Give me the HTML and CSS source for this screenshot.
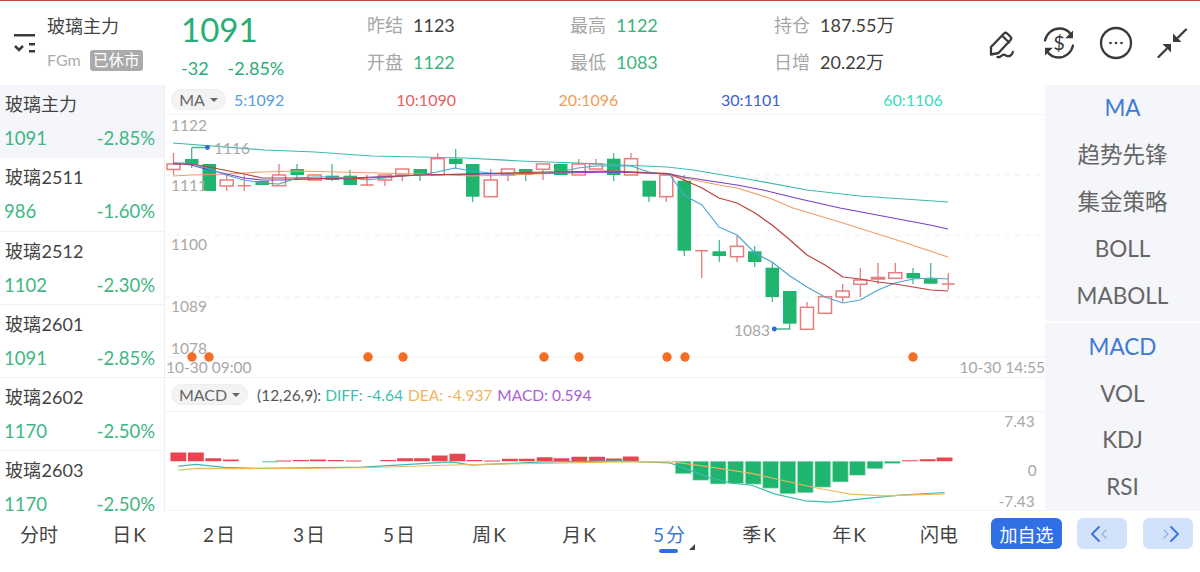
FILE: index.html
```html
<!DOCTYPE html>
<html lang="zh-CN">
<head>
<meta charset="utf-8">
<title>玻璃主力</title>
<link rel="stylesheet" href="styles.css">
</head>
<body>
<div class="app">
  <header class="header">
    <svg class="menu-icon" width="22" height="20" viewBox="0 0 22 20"><path d="M0 1.2H21M1 12l4 4 4-4M15 10.2h6M15 17.2h6"/></svg>
    <div class="title">
      <div class="name">玻璃主力</div>
      <div class="code">FGm <span class="badge">已休市</span></div>
    </div>
    <div class="quote">
      <div class="price">1091</div>
      <div class="delta"><span>-32</span><span>-2.85%</span></div>
    </div>
    <div class="stats">
      <div class="stat s1"><label>昨结</label><b class="dark">1123</b></div>
      <div class="stat s2"><label>最高</label><b>1122</b></div>
      <div class="stat s3"><label>持仓</label><b class="dark">187.55万</b></div>
      <div class="stat s1"><label>开盘</label><b>1122</b></div>
      <div class="stat s2"><label>最低</label><b>1083</b></div>
      <div class="stat s3"><label>日增</label><b class="dark">20.22万</b></div>
    </div>
    <div class="tools">
      <svg width="32" height="32" viewBox="0 0 32 32"><path d="M4 27.5V20L17 6.5Q18.6 5 20.2 6.5L23.5 9.8Q25 11.4 23.5 13L11.5 26ZM15.5 9l6.5 6.5"/><path d="M10.5 30c3 1.5 4.500-3 7-2.200 2 .7 3.500 2.500 6 .7 1.500-1 2-2 2.500-3.500"/></svg>
      <svg width="34" height="34" viewBox="0 0 34 34"><path d="M3 14.500C4.500 7.500 10.500 2.500 17.500 2.500c4.500 0 8.500 2 11 5.500M31 19.500C29.500 26.500 23.500 31.500 16.500 31.500c-4.500 0-8.500-2-11-5.500"/><path class="solid" d="M31 4.500v7.800h-7.800zM3 29.500v-7.800h7.800z"/><text x="17" y="24" class="dollar">$</text></svg>
      <svg width="34" height="34" viewBox="0 0 34 34"><circle cx="17" cy="17" r="15"/><circle class="solid" cx="11.500" cy="17" r="1.300"/><circle class="solid" cx="17" cy="17" r="1.300"/><circle class="solid" cx="22.500" cy="17" r="1.300"/></svg>
      <svg width="32" height="32" viewBox="0 0 32 32"><path d="M30 2.500 22 10.500M2.500 30 10.500 22"/><path class="solid" d="M17 6.500V15h8.500zM15 25.500V17H6.500z"/></svg>
    </div>
  </header>

  <main class="main">
    <aside class="contracts">
      <div class="contract active"><div class="c-name">玻璃主力</div><div class="c-vals"><span>1091</span><span>-2.85%</span></div></div>
      <div class="contract"><div class="c-name">玻璃 2511</div><div class="c-vals"><span>986</span><span>-1.60%</span></div></div>
      <div class="contract"><div class="c-name">玻璃 2512</div><div class="c-vals"><span>1102</span><span>-2.30%</span></div></div>
      <div class="contract"><div class="c-name">玻璃 2601</div><div class="c-vals"><span>1091</span><span>-2.85%</span></div></div>
      <div class="contract"><div class="c-name">玻璃 2602</div><div class="c-vals"><span>1170</span><span>-2.50%</span></div></div>
      <div class="contract"><div class="c-name">玻璃 2603</div><div class="c-vals"><span>1170</span><span>-2.50%</span></div></div>
    </aside>

    <section class="charts">
      <div class="legend ma-legend">
        <span class="chip ma-chip">MA<i class="caret"></i></span>
        <div class="ma-values">
          <span class="c5">5:1092</span><span class="c10">10:1090</span><span class="c20">20:1096</span><span class="c30">30:1101</span><span class="c60">60:1106</span>
        </div>
      </div>
      <svg class="price-chart" width="880" height="262" viewBox="165 115 880 262">
        <path class="grid" d="M165 175H1045M165 235H1045M165 297H1045"/>
        <path class="grid-solid" d="M165 357H1045"/>
        <path class="wick-r" d="M173.500 153V175M226.700 175V191M244.300 175V191M279 164V186M367 175V186M385 175V186M402.300 175V181M437.700 153V175M490.700 169V197M508 169V181M543 164V180M578.700 159V175M596 159V169M631 153V175M666.300 175V202M701.700 250V278M737 236V262M807 302V329M842.700 284V302M860.300 268V297M878 263V284M895.300 263V278M948.300 273V290"/>
        <path class="wick-g" d="M191.700 147.500V168M297 164V180M332 164V181M350 170V185M420 169V181M455.700 149V169M472.700 164V202M525.700 169V181M613.700 153V181M649 181V202M684.300 175V256M719.300 240V262M754.700 246V267M772.300 262V302M789.700 291V329H774.300M913 268V284M930.700 263V284M191.700 147.500H207.500"/>
        <g class="hollow">
          <rect x="167" y="164" width="13" height="5.500"/><rect x="220.200" y="180" width="13" height="6"/><path d="M237.800 185.700h13"/><rect x="272.500" y="175" width="13" height="10.700"/><rect x="308.200" y="175" width="13" height="5"/><path d="M360.500 185h13"/><rect x="378.500" y="175" width="13" height="5"/><rect x="395.800" y="169" width="13" height="6"/><rect x="431.200" y="158.700" width="13" height="16.300"/><rect x="484.200" y="180" width="13" height="16.700"/><rect x="501.500" y="169" width="13" height="6"/><rect x="536.500" y="164" width="13" height="5.300"/><rect x="572.200" y="164" width="13" height="11"/><rect x="589.500" y="164" width="13" height="5"/><rect x="624.500" y="158.700" width="13" height="16.300"/><rect x="659.800" y="175" width="13" height="21.700"/><path d="M695.200 250.700h13"/><rect x="730.500" y="246.300" width="13" height="10.400"/><rect x="800.500" y="307.300" width="13" height="22"/><rect x="818.500" y="296.700" width="13" height="16.600"/><rect x="836.200" y="291" width="13" height="6"/><rect x="853.800" y="280" width="13" height="4.300"/><rect x="871.500" y="277.500" width="13" height="1.500"/><rect x="888.800" y="272.700" width="13" height="5.600"/><path d="M941.800 284h13"/>
        </g>
        <g class="solid-g">
          <rect x="185" y="159" width="13.500" height="5.500"/><rect x="202.500" y="164" width="13.500" height="27"/><rect x="255.500" y="181" width="13.500" height="4"/><rect x="290.500" y="169" width="13.500" height="6"/><rect x="325.500" y="175.700" width="13.500" height="4.300"/><rect x="343.500" y="175.700" width="13.500" height="9.300"/><rect x="413.500" y="169" width="13.500" height="6"/><rect x="449" y="158.700" width="13.500" height="5.300"/><rect x="466" y="164" width="13.500" height="32.700"/><rect x="519" y="169" width="13.500" height="6"/><rect x="554" y="164" width="13.500" height="11"/><rect x="607" y="158.700" width="13.500" height="16.300"/><rect x="642.500" y="180.700" width="13.500" height="16"/><rect x="677.500" y="180.700" width="13.500" height="70"/><rect x="712.500" y="251.300" width="13.500" height="4.700"/><rect x="748" y="251.300" width="13.500" height="10.700"/><rect x="765.500" y="267.700" width="13.500" height="29.300"/><rect x="783" y="291" width="13.500" height="32.700"/><rect x="906.500" y="273" width="13.500" height="5.300"/><rect x="924" y="278.700" width="13.500" height="5"/>
        </g>
        <polyline class="l60" points="173,143 265,150 315,152 372,156 465,158 520,161 577,163 667,167 693,170 753,180 807,190 860,196 948,202"/>
        <polyline class="l20" points="173,176 191,175 226,174 262,172 297,171 420,174 472,176 508,175 560,173 613,171 666,173 684,178 719,185 737,188 772,199 793,208 843,223 903,242 948,257"/>
        <polyline class="l30" points="173,163 191,165 209,170 244,178 262,180 279,180 350,178 420,175 472,174 560,173 613,172 670,174 684,177 737,185 763,190 800,199 840,208 930,225 948,229"/>
        <polyline class="l5" points="173,163 191,163 209,169 226,175 244,180 262,183 279,184 297,178 314,177 332,177 350,178 367,180 385,178 402,176 420,175 437,172 455,168 472,171 490,173 508,174 525,173 543,173 560,172 578,168 596,166 613,166 631,166 649,172 670,175 684,195 702,205 719,227 737,235 755,253 772,262 790,276 807,287 825,297 843,303 860,300 878,290 895,283 913,279 931,278 948,279"/>
        <polyline class="l10" points="173,164 191,164 209,167 244,174 262,178 297,178 350,179 420,175 472,174 543,172 613,171 670,174 684,180 702,188 719,198 737,203 755,213 772,225 790,240 807,255 825,265 843,277 860,279 878,282 895,284 913,287 931,290 948,291"/>
        <circle class="mark" cx="207.500" cy="147.500" r="2.400"/><circle class="mark" cx="774.300" cy="329" r="2.400"/>
        <g class="axis">
          <text x="171" y="131">1122</text><text x="171" y="191">1111</text><text x="171" y="250">1100</text><text x="171" y="312">1089</text><text x="171" y="354">1078</text>
          <text x="214" y="154">1116</text><text x="734" y="336">1083</text>
          <text x="166" y="373">10-30 09:00</text><text x="1045" y="373" class="end">10-30 14:55</text>
        </g>
        <g class="dots"><circle cx="192" cy="357" r="4.700"/><circle cx="209" cy="357" r="4.700"/><circle cx="368" cy="357" r="4.700"/><circle cx="403" cy="357" r="4.700"/><circle cx="544" cy="357" r="4.700"/><circle cx="579" cy="357" r="4.700"/><circle cx="667" cy="357" r="4.700"/><circle cx="685" cy="357" r="4.700"/><circle cx="913" cy="357" r="4.700"/></g>
      </svg>
      <div class="legend macd-legend">
        <span class="chip macd-chip">MACD<i class="caret"></i></span>
        <span class="params">(12,26,9):</span><span class="diff">DIFF: -4.64</span><span class="dea">DEA: -4.937</span><span class="macd">MACD: 0.594</span>
      </div>
      <svg class="macd-chart" width="880" height="99" viewBox="165 412 880 99">
        <path class="bar-r" d="M166 453h16v8.700h-16zM183.700 453h16v8.700h-16zM201.300 458.700h16v3h-16zM219 460h16v1.700h-16zM272 461h16v1h-16zM290 460.500h16v1.200h-16zM307 460h16v1.700h-16zM325 460.500h16v1.200h-16zM343 461h16v1h-16zM378 460.500h16v1.200h-16zM395 458.700h16v3h-16zM412 458.700h16v3h-16zM430 456h16v5.700h-16zM448 454.300h16v7.400h-16zM465 460.500h16v1.200h-16zM483 461h16v1h-16zM501 459.300h16v2.400h-16zM518 459.300h16v2.400h-16zM536 457.700h16v4h-16zM553 458.700h16v3h-16zM571 457.300h16v4.400h-16zM589 457.300h16v4.400h-16zM606 459h16v2.700h-16zM623 457h16v4.700h-16zM905 460.800h16v1h-16zM923 459.700h16v2h-16zM940 458h16v3.700h-16z"/>
        <path class="bar-g" d="M676 461.700h16v12.600h-16zM693.700 461.700h16v19.300h-16zM711.300 461.700h16v23h-16zM729 461.700h16v22.600h-16zM746.700 461.700h16v23.300h-16zM764.300 461.700h16v27.300h-16zM781.700 461.700h16v33h-16zM799.300 461.700h16v32h-16zM817 461.700h16v26.300h-16zM834.700 461.700h16v21h-16zM852 461.700h16v14.300h-16zM869.700 461.700h16v7.600h-16zM887.300 461.700h16v2.300h-16zM259 461.700h16v1h-16z"/>
        <polyline class="diff-line" points="174,466.700 192,465 220,468 257,469 360,467.700 450,462.300 470,465.700 537,462.700 620,461.300 670,463.300 693,471.700 710,478 733,484 753,486 777,495 807,501.700 833,503 870,499.300 903,496 948,493.300"/>
        <polyline class="dea-line" points="174,470.700 193,469 260,469.300 360,468.300 460,465.300 537,464 620,462.300 673,462.300 710,467.300 753,474 787,481.700 820,489 853,495 887,496.700 948,494.700"/>
        <g class="axis"><text x="1039" y="427" class="end">7.43</text><text x="1041" y="477" class="end">0</text><text x="1039" y="508" class="end">-7.43</text></g>
      </svg>
    </section>

    <nav class="indicators">
      <div class="ind-group">
        <span class="on">MA</span><span>趋势先锋</span><span>集金策略</span><span>BOLL</span><span>MABOLL</span>
      </div>
      <div class="ind-group lower">
        <span class="on">MACD</span><span>VOL</span><span>KDJ</span><span>RSI</span>
      </div>
    </nav>
  </main>

  <footer class="tabbar">
    <div class="tabs">
      <span>分时</span><span>日 K</span><span>2 日</span><span>3 日</span><span>5 日</span><span>周 K</span><span>月 K</span><span class="current">5 分</span><span>季 K</span><span>年 K</span><span>闪电</span>
    </div>
    <div class="actions">
      <button class="add">加自选</button>
      <button class="nav"><svg width="26" height="18" viewBox="0 0 26 18"><path class="strong" d="M10 2 3 9l7 7"/><path class="weak" d="M17 5l-4 4 4 4"/></svg></button>
      <button class="nav"><svg width="26" height="18" viewBox="0 0 26 18"><path class="weak" d="M9 5l4 4-4 4"/><path class="strong" d="M16 2l7 7-7 7"/></svg></button>
    </div>
  </footer>
</div>
</body>
</html>
```
FILE: styles.css
```css
* { box-sizing: border-box; }
html, body { margin: 0; padding: 0; background: #fff; }
body { font-family: Lato, "Noto Sans CJK SC", sans-serif; color: #444; overflow: hidden; }
.app { width: 1200px; height: 572px; display: flex; flex-direction: column; }

/* header */
.header { height: 85px; border-top: 1px solid #bf4a48; display: flex; align-items: flex-start; position: relative; }
.menu-icon { margin: 33px 0 0 14px; flex: none; fill: none; stroke: #3a3a3a; stroke-width: 2.500; }
.title { margin: 12px 0 0 11px; width: 134px; flex: none; }
.name { font-size: 18px; line-height: 26px; color: #444; }
.code { margin-top: 10px; font-size: 16px; line-height: 22px; color: #aaa; display: flex; align-items: center; gap: 5px; white-space: pre; }
.badge { background: #aaa; color: #fff; border-radius: 3px; font-size: 15.500px; line-height: 21px; padding: 0 3px; width: 53px; text-align: center; }
.quote { width: 186px; flex: none; padding-top: 9px; color: #27ae74; }
.price { font-size: 33px; line-height: 38px; }
.delta { margin-top: 9px; font-size: 18px; line-height: 22px; display: flex; gap: 19px; }
.stats { width: 544px; flex: none; margin-top: 13px; display: grid; grid-template-columns: 203px 204px 137px; row-gap: 15px; font-size: 18px; line-height: 22px; }
.stat { display: flex; gap: 10px; white-space: nowrap; }
.stat label { color: #a6a6a6; }
.stat b { font-weight: 400; color: #3cb37e; }
.stat b.dark { color: #404040; }
.tools { position: absolute; right: 12px; top: 25px; display: flex; gap: 23px; align-items: center; }
.tools svg { fill: none; stroke: #3a3a3a; stroke-width: 2.300; stroke-linecap: round; stroke-linejoin: round; }
.tools .solid { fill: #3a3a3a; stroke: none; }
.tools .dollar { font-size: 20px; fill: #3a3a3a; stroke: none; text-anchor: middle; }

/* main */
.main { height: 426px; display: flex; flex: none; }
.contracts { width: 165px; flex: none; height: 426px; overflow: hidden; border-right: 1px solid #eee; }
.contract { height: 73.300px; padding: 7px 9px 0 5px; border-bottom: 1px solid #f2f2f2; }
.contract.active { background: #f4f6fb; border-bottom: 0; }
.c-name { font-size: 18px; line-height: 24px; color: #444; word-spacing: -4px; }
.c-vals { margin-top: 10px; display: flex; justify-content: space-between; font-size: 18.500px; line-height: 24px; color: #3fb683; }
.c-vals span:first-child { margin-left: -1px; }

.charts { width: 880px; flex: none; height: 426px; display: flex; flex-direction: column; }
.legend { display: flex; align-items: center; white-space: nowrap; }
.ma-legend { height: 30px; padding-left: 6px; border-bottom: 1px solid #f3f3f3; font-size: 16px; }
.chip { display: inline-flex; align-items: center; justify-content: center; gap: 5px; height: 21px; border: 1px solid #eee; background: #f3f3f3; border-radius: 11px; font-size: 16px; color: #666; flex: none; }
.ma-chip { width: 55px; }
.macd-chip { width: 77px; }
.caret { width: 0; height: 0; border: 4px solid transparent; border-top: 4.500px solid #666; border-bottom: 0; }
.ma-values { display: grid; grid-template-columns: repeat(5, 162.300px); margin-left: 8px; }
.c5 { color: #5b9be0; }
.c10 { color: #e2625f; }
.c20 { color: #ef9d58; }
.c30 { color: #3c60cf; }
.c60 { color: #3fd8bd; }

.price-chart, .macd-chart { display: block; flex: none; }
.macd-legend { height: 35px; padding-left: 6px; font-size: 15.500px; border-top: 1px solid #f2f2f2; border-bottom: 1px solid #f3f3f3; }
.params { margin-left: 9px; color: #555; }
.diff { margin-left: 4px; color: #3cc0ae; }
.dea { margin-left: 5px; color: #efb65c; }
.macd { margin-left: 5px; color: #a95cd8; }
.macd-chart { border-bottom: 1px solid #f3f3f3; }

.grid { stroke: #efefef; stroke-dasharray: 5 5; fill: none; }
.grid-solid { stroke: #f2f2f2; fill: none; }
.wick-r { stroke: #df7f7f; stroke-width: 1.300; fill: none; }
.wick-g { stroke: #46b98a; stroke-width: 1.300; fill: none; }
.hollow rect { fill: #fff; stroke: #e87d7d; stroke-width: 1.500; }
.hollow path { stroke: #e87d7d; stroke-width: 1.500; fill: none; }
.solid-g rect { fill: #1fb56f; }
polyline { fill: none; stroke-width: 1.200; stroke-linejoin: round; }
.l5 { stroke: #4fa3d6; }
.l10 { stroke: #b9403e; }
.l20 { stroke: #ee9f66; }
.l30 { stroke: #7a3fcc; }
.l60 { stroke: #3dbaaa; }
.mark { fill: #2f66d0; }
.axis text { font-size: 15.500px; fill: #a8a8a8; }
.axis text.end { text-anchor: end; }
.dots circle { fill: #f56d24; }
.bar-r { fill: #ea4450; }
.bar-g { fill: #1fb56f; stroke: #bfe9d5; stroke-width: .6; }
.diff-line { stroke: #3bbcab; }
.dea-line { stroke: #edb95d; }

.indicators { width: 155px; flex: none; display: flex; flex-direction: column; gap: 2px; }
.ind-group { background: #f5f6f9; display: flex; flex-direction: column; align-items: center; font-size: 22.500px; color: #666; }
.ind-group span { display: block; height: 47px; line-height: 46px; white-space: nowrap; }
.ind-group:first-child { height: 236px; }
.ind-group.lower { flex: 1; padding-top: 1px; }
.ind-group.lower span { height: 46.600px; }
.ind-group .on { color: #3f79d8; }

/* bottom */
.tabbar { flex: 1; display: flex; align-items: flex-start; }
.tabs { width: 991px; flex: none; padding: 9px 0 0 20px; display: flex; gap: 52px; font-size: 19px; line-height: 30px; color: #444; }
.tabs span { width: 38px; text-align: center; white-space: nowrap; position: relative; word-spacing: -3px; }
.tabs .current { color: #3f79d8; }
.tabs .current::before { content: ""; position: absolute; left: 9px; top: 29px; width: 19px; height: 4px; border-radius: 2px; background: #2f6fe0; }
.tabs .current::after { content: ""; position: absolute; left: 39px; top: 24px; border: 3.500px solid transparent; border-right-color: #444; border-bottom-color: #444; }
.actions { margin-top: 7px; display: flex; }
.actions button { height: 31px; border: 0; border-radius: 6px; padding: 0; font-family: inherit; display: flex; align-items: center; justify-content: center; }
.add { width: 71px; background: #2f71e4; color: #fff; font-size: 18px; }
.nav { width: 50px; background: #d3e2fb; margin-left: 15px; }
.nav:last-child { margin-left: 16px; }
.nav svg { fill: none; stroke-linecap: round; stroke-linejoin: round; }
.strong { stroke: #3a78de; stroke-width: 2; }
.weak { stroke: #8fb0ea; stroke-width: 1.300; }
```
